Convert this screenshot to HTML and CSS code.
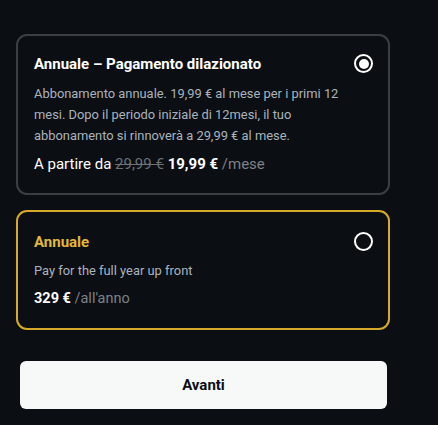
FILE: index.html
```html
<!DOCTYPE html>
<html lang="it">
<head>
<meta charset="utf-8">
<link rel="stylesheet" href="styles.css">
</head>
<body>
<main class="page">
  <section class="plan plan--selected">
    <div class="plan-body">
      <h2 class="plan-title">Annuale – Pagamento dilazionato</h2>
      <p class="plan-desc">Abbonamento annuale. 19,99 € al mese per i primi 12 mesi. Dopo il periodo iniziale di 12mesi, il tuo abbonamento si rinnoverà a 29,99 € al mese.</p>
      <p class="plan-price plan-price--first">A partire da <s class="old">29,99 €</s> <strong>19,99 €</strong> <span class="unit">/mese</span></p>
    </div>
    <span class="radio radio--on"></span>
  </section>
  <section class="plan plan--gold">
    <div class="plan-body">
      <h2 class="plan-title plan-title--gold">Annuale</h2>
      <p class="plan-desc">Pay for the full year up front</p>
      <p class="plan-price"><strong>329 €</strong> <span class="unit">/all'anno</span></p>
    </div>
    <span class="radio"></span>
  </section>
  <button class="next">Avanti</button>
</main>
</body>
</html>
```
FILE: styles.css
```css
html, body {
  margin: 0;
  background: #0b0f13;
}
body {
  font-family: Roboto, "Liberation Sans", sans-serif;
  color: #ffffff;
}
.page {
  width: 374px;
  padding: 34px 0 0 16px;
  display: flex;
  flex-direction: column;
}
.plan {
  display: flex;
  justify-content: space-between;
  align-items: flex-start;
  border: 2px solid #3b3f44;
  border-radius: 11px;
  padding: 18px 15px 18px 16px;
}
.plan--gold {
  margin-top: 15px;
  border-color: #d6a928;
  padding: 20px 15px 18px 16px;
}
.plan-title {
  margin: 0;
  font-size: 15px;
  font-weight: 700;
  line-height: 20px;
  color: #ffffff;
}
.plan-title--gold {
  color: #e2b73a;
}
.plan-desc {
  margin: 9px 0 0;
  font-size: 12.9px;
  line-height: 21px;
  color: #aab3bd;
  max-width: 312px;
}
.plan--gold .plan-desc {
  margin-top: 8px;
}
.plan-price {
  margin: 7px 0 0;
  font-size: 14.5px;
  line-height: 22px;
  color: #ffffff;
}
.plan-price strong {
  font-weight: 700;
}
.plan-price--first {
  font-size: 15px;
}
.old {
  color: #6c7178;
}
.unit {
  color: #7c8188;
}
.radio {
  flex: none;
  width: 19px;
  height: 19px;
  box-sizing: border-box;
  border: 2px solid #ffffff;
  border-radius: 50%;
  display: flex;
  align-items: center;
  justify-content: center;
}
.radio--on::after {
  content: "";
  width: 10px;
  height: 10px;
  border-radius: 50%;
  background: #ffffff;
}
.next {
  margin: 31px 3px 0 4px;
  height: 48px;
  border: none;
  border-radius: 6px;
  background: #f7f9f9;
  color: #0b0f13;
  font-family: Roboto, "Liberation Sans", sans-serif;
  font-size: 15px;
  font-weight: 700;
}
```
